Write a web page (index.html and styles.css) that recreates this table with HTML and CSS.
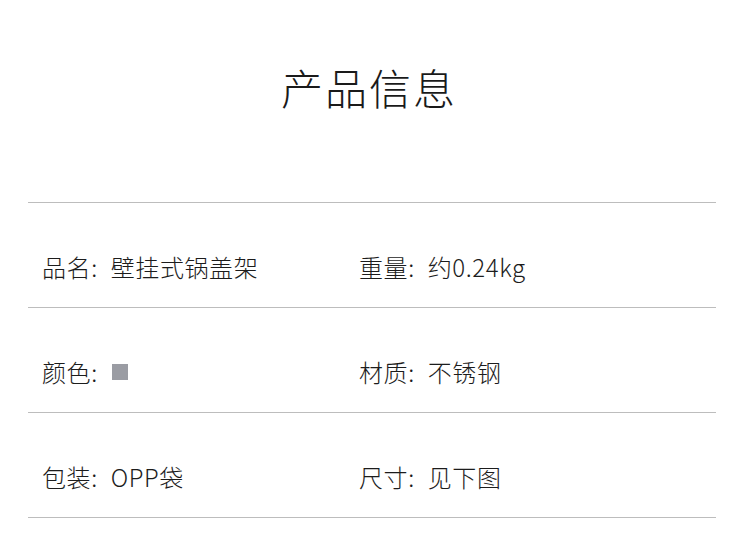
FILE: index.html
```html
<!DOCTYPE html>
<html lang="zh">
<head>
<meta charset="utf-8">
<link rel="stylesheet" href="styles.css">
</head>
<body>
<div class="page">
  <header class="title-block">
    <h1 class="title">产品信息</h1>
  </header>
  <div class="table">
    <div class="row">
      <div class="cell">品名: 壁挂式锅盖架</div>
      <div class="cell">重量: 约0.24kg</div>
    </div>
    <div class="row">
      <div class="cell">颜色: <span class="swatch"></span></div>
      <div class="cell">材质: 不锈钢</div>
    </div>
    <div class="row">
      <div class="cell">包装: OPP袋</div>
      <div class="cell">尺寸: 见下图</div>
    </div>
  </div>
</div>
</body>
</html>
```

FILE: styles.css
```css
html, body {
  margin: 0;
  padding: 0;
  background: #ffffff;
}
.page {
  width: 750px;
  height: 546px;
  font-family: "Noto Sans CJK SC", "Liberation Sans", sans-serif;
  color: #1c1c1c;
}
.title-block {
  height: 202px;
  display: flex;
  align-items: flex-start;
  justify-content: center;
  border-bottom: 1px solid #bdbdbd;
  margin: 0 34px 0 28px;
}
.title {
  margin: 57px 6px 0 0;
  font-size: 42px;
  font-weight: 200;
  letter-spacing: 2px;
  line-height: 60px;
  color: #1a1a1a;
}
.table {
  margin: 0 34px 0 28px;
}
.row {
  height: 104px;
  border-bottom: 1px solid #bdbdbd;
  display: flex;
  align-items: flex-start;
}
.cell {
  font-size: 24px;
  font-weight: 300;
  line-height: 34px;
  padding-top: 47px;
  letter-spacing: 0.6px;
  word-spacing: 7px;
  display: flex;
  align-items: center;
}
.cell:first-child {
  width: 317px;
  padding-left: 14px;
}
.swatch {
  display: inline-block;
  width: 16px;
  height: 16px;
  background: #9a9ca3;
  margin-left: 14px;
}
```
